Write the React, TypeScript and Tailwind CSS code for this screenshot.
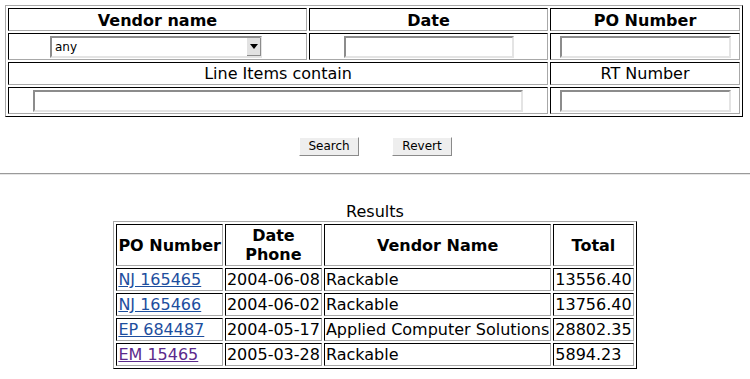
import React from "react";

const cell =
  "border border-t-black border-l-black border-r-[#a8a8a8] border-b-[#a8a8a8] p-[1px]";
const input =
  "block mx-auto h-[22px] bg-white border-2 border-t-[#8c8c8c] border-l-[#8c8c8c] border-r-[#e4e4e4] border-b-[#e4e4e4] outline-none";
const button =
  "h-[19px] w-[60px] bg-[#eeeeee] border border-t-white border-l-white border-r-[#8a8a8a] border-b-[#8a8a8a] text-[12px] leading-[17px] text-black";

const rows = [
  { po: "NJ 165465", date: "2004-06-08", vendor: "Rackable", total: "13556.40", visited: false },
  { po: "NJ 165466", date: "2004-06-02", vendor: "Rackable", total: "13756.40", visited: false },
  { po: "EP 684487", date: "2004-05-17", vendor: "Applied Computer Solutions", total: "28802.35", visited: false },
  { po: "EM 15465", date: "2005-03-28", vendor: "Rackable", total: "5894.23", visited: true },
];

export default function App() {
  return (
    <div className="w-[750px] min-h-[379px] bg-white text-black text-[16px] leading-[19px] font-['DejaVu_Sans',sans-serif] pt-[5px]">
      {/* Search form */}
      <table className="ml-[5px] w-[738px] table-fixed border-separate border-spacing-[2px] border border-t-[#a8a8a8] border-l-[#a8a8a8] border-r-black border-b-black">
        <tbody>
          <tr>
            <th className={`${cell} w-[299px] font-bold text-center pt-[2px] pb-0`}>Vendor name</th>
            <th className={`${cell} w-[239px] font-bold text-center pt-[2px] pb-0`}>Date</th>
            <th className={`${cell} w-[190px] font-bold text-center pt-[2px] pb-0`}>PO Number</th>
          </tr>
          <tr>
            <td className={cell}>
              <div className="h-[23px] flex items-center justify-center pr-[3px]">
                <div className="relative w-[212px] h-[22px]">
                  <select className="w-full h-full appearance-none bg-white border-2 border-t-[#8c8c8c] border-l-[#8c8c8c] border-r-[#e4e4e4] border-b-[#e4e4e4] pl-[3px] text-[12px] leading-[16px] outline-none">
                    <option>any</option>
                  </select>
                  <span className="absolute right-[1px] top-[2px] w-[14px] h-[18px] bg-[#e2e2e2] border-r border-b border-r-[#8c8c8c] border-b-[#8c8c8c] flex items-center justify-center pointer-events-none">
                    <svg width="8" height="5" viewBox="0 0 8 5">
                      <path d="M0 0H8L4 5Z" fill="#000" />
                    </svg>
                  </span>
                </div>
              </div>
            </td>
            <td className={cell}>
              <div className="h-[23px] flex items-center justify-center">
                <input className={`${input} w-[170px]`} />
              </div>
            </td>
            <td className={cell}>
              <div className="h-[23px] flex items-center justify-center">
                <input className={`${input} w-[171px]`} />
              </div>
            </td>
          </tr>
          <tr>
            <td colSpan={2} className={`${cell} text-center`}>Line Items contain</td>
            <td className={`${cell} text-center`}>RT Number</td>
          </tr>
          <tr>
            <td colSpan={2} className={cell}>
              <div className="h-[23px] flex items-center justify-center">
                <input className={`${input} w-[490px]`} />
              </div>
            </td>
            <td className={cell}>
              <div className="h-[23px] flex items-center justify-center">
                <input className={`${input} w-[171px]`} />
              </div>
            </td>
          </tr>
        </tbody>
      </table>

      <div className="mt-[20px] flex justify-center gap-[33px] pl-[1px]">
        <button className={button}>Search</button>
        <button className={button}>Revert</button>
      </div>

      <hr className="mt-[17px] border-0 border-t border-b border-t-[#9a9a9a] border-b-[#e6e6e6]" />

      {/* Results */}
      <table className="mx-auto mt-[27px] border-separate border-spacing-[2px] border border-t-[#a8a8a8] border-l-[#a8a8a8] border-r-black border-b-black">
        <caption className="text-center">Results</caption>
        <thead>
          <tr>
            <th className={`${cell} font-bold text-center`}>PO Number</th>
            <th className={`${cell} font-bold text-center`}>
              Date
              <br />
              Phone
            </th>
            <th className={`${cell} font-bold text-center`}>Vendor Name</th>
            <th className={`${cell} font-bold text-center`}>Total</th>
          </tr>
        </thead>
        <tbody>
          {rows.map((r) => (
            <tr key={r.po}>
              <td className={cell}>
                <a
                  href="#"
                  className={`underline ${r.visited ? "text-[#5b2a8c]" : "text-[#1d4e9e]"}`}
                >
                  {r.po}
                </a>
              </td>
              <td className={cell}>{r.date}</td>
              <td className={cell}>{r.vendor}</td>
              <td className={cell}>{r.total}</td>
            </tr>
          ))}
        </tbody>
      </table>
    </div>
  );
}
